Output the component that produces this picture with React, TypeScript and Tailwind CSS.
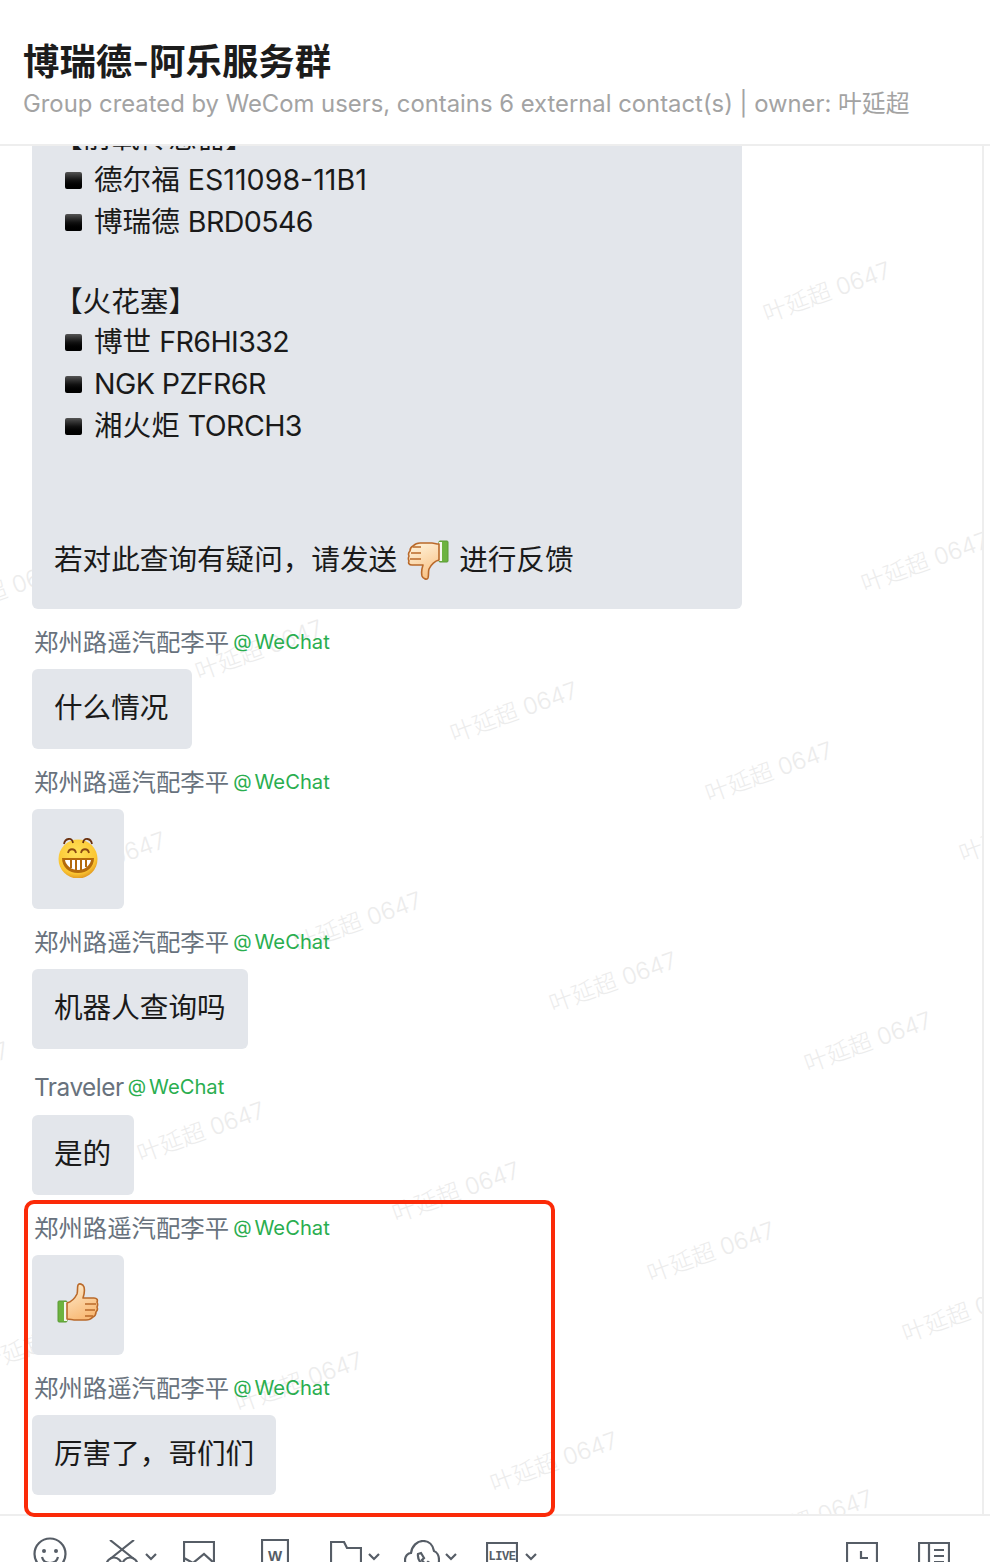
const font = "font-['Inter','Noto_Sans_CJK_SC',sans-serif]";

const marks = [
  [827, 146], [925, 416], [3, 444], [259, 504], [514, 566], [769, 626], [102, 716], [1023, 686],
  [358, 776], [613, 836], [868, 896], [-55, 926], [201, 986], [456, 1046], [711, 1106], [966, 1166], [43, 1196], [299, 1236], [554, 1316], [809, 1374],
];

function Thumb({ down = false }: { down?: boolean }) {
  return (
    <svg width="42" height="42" viewBox="0 0 42 42" className={down ? "rotate-180" : ""}>
      <defs>
        <linearGradient id={down ? "skinD" : "skinU"} x1="0" y1="0" x2="0.4" y2="1">
          <stop offset="0" stopColor={down ? "#f9bb78" : "#fdeccf"} />
          <stop offset="1" stopColor={down ? "#fdeccf" : "#f9bb78"} />
        </linearGradient>
      </defs>
      <rect x="1" y="19" width="9" height="21" rx="1" fill="#6cb33f" stroke="#5a9a35" />
      <rect x="7" y="20" width="3" height="19" fill="#f4f7ef" />
      <path
        d="M10 21c4-1 8-5 10-9 1-3 0-6 1-9 1-2 5-1 6 2 1 4 0 8-1 11h11c3 0 4 2 3 4 1 2 1 3 0 5 1 2 1 3-1 5 0 3-1 4-3 5-2 2-4 3-7 3H17c-2 0-4-1-7-1z"
        fill={`url(#${down ? "skinD" : "skinU"})`}
        stroke="#b9692a"
        strokeWidth="1.6"
        strokeLinejoin="round"
      />
      <path d="M28 22h11M28 28h10M28 34h8" stroke="#b9692a" strokeWidth="1.6" fill="none" />
    </svg>
  );
}

function Grin() {
  return (
    <svg width="42" height="42" viewBox="0 0 42 42">
      <defs>
        <radialGradient id="face" cx="0.45" cy="0.35" r="0.7">
          <stop offset="0" stopColor="#ffe25a" />
          <stop offset="0.75" stopColor="#fbc531" />
          <stop offset="1" stopColor="#d98a1c" />
        </radialGradient>
      </defs>
      <circle cx="21" cy="23" r="19.5" fill="url(#face)" />
      <path d="M7 8c1-6 8-7 9-1M26 7c1-6 8-5 9 1" stroke="#6b3210" strokeWidth="1.8" fill="none" />
      <path d="M11 17c1-5 7-5 8 0M24 17c1-5 7-5 8 0" stroke="#8a4a12" strokeWidth="1.8" fill="none" />
      <path d="M5 22h32c0 9-7 15-16 15S5 31 5 22z" fill="#b46a0c" />
      <path d="M8 24h26c-1 6-7 10-13 10S9 30 8 24z" fill="#fff" />
      <path d="M14 24v8M19 24v10M24 24v10M29 24v7" stroke="#b46a0c" strokeWidth="2" />
    </svg>
  );
}

function Line({ label, code, tight = true }: { label: string; code: string; tight?: boolean }) {
  return (
    <div className="flex h-[42px] items-center whitespace-pre pl-[33px]">
      <span className="h-[17px] w-[17px] rounded-[2px] bg-gradient-to-b from-[#555] via-[#111] to-[#000]" />
      <span className="ml-[12px]">{label}</span>
      <span className={tight ? "tracking-[-0.6px]" : ""}>{code}</span>
    </div>
  );
}

function Message({ name, children, wide = false }: { name: string; children: React.ReactNode; wide?: boolean }) {
  return (
    <div className={wide ? "pt-[21px]" : "pt-[16px]"}>
      <div className={`flex h-[34px] items-center pl-[2px] text-[24.4px] text-[#68727d] ${wide ? "mb-[11px]" : "mb-[10px]"}`}>
        <span className={wide ? "tracking-[-0.5px]" : ""}>{name}</span>
        <span className="ml-[4px] text-[19px] text-[#2aae4f]">@</span>
        <span className="ml-[3px] text-[20.2px] text-[#2aae4f]">WeChat</span>
      </div>
      {children}
    </div>
  );
}

function TextBubble({ text, width }: { text: string; width: string }) {
  return <div className={`${width} rounded-[6px] bg-[#e3e6eb] pb-[21px] pl-[22px] pt-[19px] text-[28.6px] leading-[40px] text-[#1a1a1a]`}>{text}</div>;
}

function EmojiBubble({ children }: { children: React.ReactNode }) {
  return <div className="flex h-[100px] w-[92px] items-center justify-center rounded-[6px] bg-[#e3e6eb] pb-[4px]">{children}</div>;
}

const stroke = { fill: "none", stroke: "#565d66", strokeWidth: 2.2 };

function Chevron() {
  return (
    <svg width="12" height="8" viewBox="0 0 12 8" className="mt-[12px]">
      <path d="M1 1l5 5 5-5" {...stroke} />
    </svg>
  );
}

function Toolbar() {
  return (
    <div className="flex h-[46px] items-start overflow-hidden pl-[33px] pr-[40px]">
      <svg width="34" height="34" viewBox="0 0 34 34" className="mt-[21px]">
        <circle cx="17" cy="17" r="15.5" {...stroke} />
        <circle cx="11" cy="14" r="2" fill="#565d66" />
        <circle cx="23" cy="14" r="2" fill="#565d66" />
        <path d="M9 20c2 8 14 8 16 0" {...stroke} />
      </svg>
      <svg width="34" height="34" viewBox="0 0 34 34" className="ml-[38px] mt-[24px]">
        <path d="M5 0l24 19M29 0L5 19" {...stroke} />
        <circle cx="9" cy="25" r="7.5" {...stroke} />
        <circle cx="25" cy="25" r="7.5" {...stroke} />
      </svg>
      <div className="ml-[6px] mt-[25px]"><Chevron /></div>
      <svg width="32" height="34" viewBox="0 0 32 34" className="ml-[26px] mt-[25px]">
        <path d="M1 30V1h30v29" {...stroke} />
        <path d="M1 17l9 5 11-9 10 9" {...stroke} />
      </svg>
      <svg width="28" height="34" viewBox="0 0 28 34" className="ml-[46px] mt-[23px]">
        <path d="M1 34V1h26v33" {...stroke} />
        <text x="14" y="22" textAnchor="middle" fontSize="15" fontWeight="700" fill="#565d66" fontFamily="Liberation Sans">W</text>
      </svg>
      <svg width="32" height="34" viewBox="0 0 32 34" className="ml-[41px] mt-[25px]">
        <path d="M1 34V1h13l3 6h14v27" {...stroke} />
      </svg>
      <div className="ml-[6px] mt-[25px]"><Chevron /></div>
      <svg width="36" height="34" viewBox="0 0 36 34" className="ml-[24px] mt-[24px]">
        <path d="M8 28C3 28 1 24 1 20c0-4 3-7 6-7C8 6 13 1 19 1c6 0 10 4 11 10 3 1 5 5 5 9 0 4-2 8-6 8" {...stroke} />
        <path d="M14 14l3-1 3 5-2 2c1 2 2 3 4 4l2-2 5 3-1 3c-7 1-15-7-14-14z" {...stroke} />
      </svg>
      <div className="ml-[5px] mt-[25px]"><Chevron /></div>
      <svg width="32" height="34" viewBox="0 0 32 34" className="ml-[29px] mt-[26px]">
        <path d="M1 34V1h30v33" {...stroke} />
        <text x="16" y="18" textAnchor="middle" fontSize="12" fontWeight="700" fill="#565d66" fontFamily="Liberation Mono" letterSpacing="-0.5">LIVE</text>
      </svg>
      <div className="ml-[7px] mt-[25px]"><Chevron /></div>
      <svg width="32" height="34" viewBox="0 0 32 34" className="ml-auto mt-[26px]">
        <path d="M1 34V1h30v33" {...stroke} />
        <path d="M15 9v7h7" {...stroke} />
      </svg>
      <svg width="32" height="34" viewBox="0 0 32 34" className="ml-[40px] mt-[26px]">
        <path d="M1 34V1h30v33M11 1v33M16 8h10M16 14h10M16 20h10" {...stroke} />
      </svg>
    </div>
  );
}

export default function App() {
  return (
    <div className={`flex h-[1562px] w-[990px] flex-col overflow-hidden bg-white ${font}`}>
      <header className="relative z-10 h-[146px] shrink-0 border-b-2 border-[#eeeeee] bg-white pl-[23px] pt-[37px]">
        <div className="h-[49px] text-[36.4px] font-semibold leading-[50px] text-[#1c1c1c]">博瑞德-阿乐服务群</div>
        <div className="text-[23.84px] leading-[36px] text-[#a3a3a3]">Group created by WeCom users, contains 6 external contact(s) | owner: 叶延超</div>
      </header>

      <div className="relative mr-[6px] flex-1 overflow-hidden border-r-2 border-[#eeeeee] pl-[32px]">
        {marks.map(([x, y], i) => (
          <span
            key={i}
            className="absolute -translate-x-1/2 -translate-y-1/2 -rotate-[20deg] whitespace-nowrap text-[23.5px] font-light leading-[30px] text-[#ececec]"
            style={{ left: x, top: y }}
          >
            叶延超 0647
          </span>
        ))}
        <div className="relative">
          <div className="-mt-[29px] w-[710px] rounded-b-[6px] bg-[#e3e6eb] pb-[28px] text-[28.6px] leading-[40px] text-[#1a1a1a]">
            <div className="flex h-[42px] items-center pl-[22px]">【前氧传感器】</div>
            <Line label="德尔福 " code="ES11098-11B1" tight={false} />
            <Line label="博瑞德 " code="BRD0546" />
            <div className="h-[40px]" />
            <div className="flex h-[38px] items-center pl-[22px]">【火花塞】</div>
            <Line label="博世 " code="FR6HI332" />
            <Line label="" code="NGK PZFR6R" />
            <Line label="湘火炬 " code="TORCH3" />
            <div className="h-[92px]" />
            <div className="flex h-[42px] items-center pl-[22px]">
              若对此查询有疑问，请发送
              <span className="mx-[10px]"><Thumb down /></span>
              进行反馈
            </div>
          </div>
          <Message name="郑州路遥汽配李平"><TextBubble text="什么情况" width="w-[160px]" /></Message>
          <Message name="郑州路遥汽配李平"><EmojiBubble><Grin /></EmojiBubble></Message>
          <Message name="郑州路遥汽配李平"><TextBubble text="机器人查询吗" width="w-[216px]" /></Message>
          <Message name="Traveler" wide><TextBubble text="是的" width="w-[102px]" /></Message>
          <Message name="郑州路遥汽配李平"><EmojiBubble><Thumb /></EmojiBubble></Message>
          <Message name="郑州路遥汽配李平"><TextBubble text="厉害了，哥们们" width="w-[244px]" /></Message>
        </div>
      </div>

      <div className="relative border-t-2 border-[#eeeeee]">
        <div className="absolute -top-[316px] left-[24px] h-[317px] w-[531px] rounded-[10px] border-[4px] border-[#fb2a08]" />
        <Toolbar />
      </div>
    </div>
  );
}
